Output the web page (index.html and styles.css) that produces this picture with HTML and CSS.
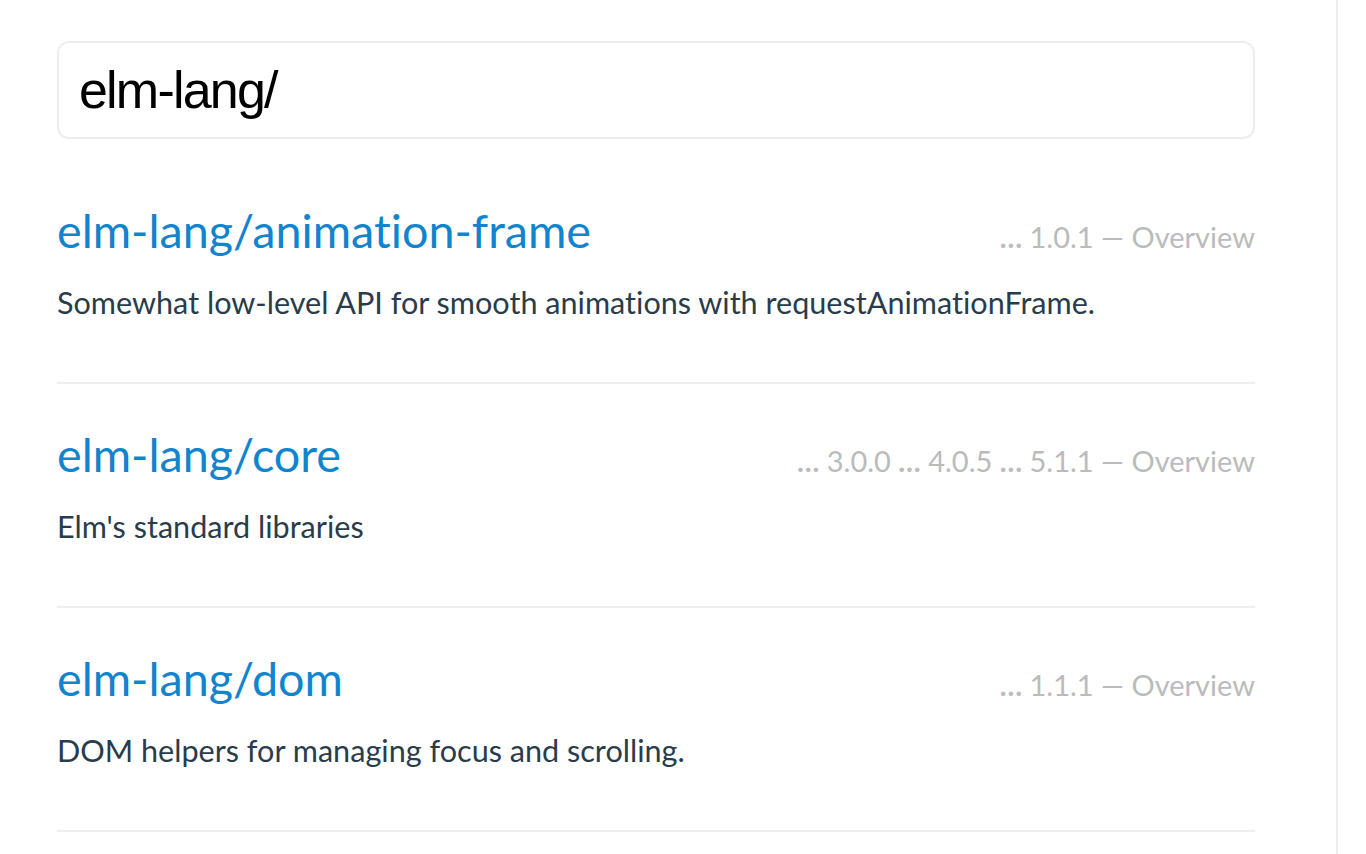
FILE: index.html
```html
<!DOCTYPE html>
<html lang="en">
<head>
<meta charset="utf-8">
<title>Elm Packages</title>
<link rel="stylesheet" href="styles.css">
</head>
<body>
<div class="page">
  <main class="content">
    <div class="search">
      <input class="search-input" type="text" value="elm-lang/">
    </div>
    <ul class="results">
      <li class="pkg">
        <div class="pkg-head">
          <a class="pkg-name" href="#">elm-lang/animation-frame</a>
          <span class="pkg-versions"><span class="dots">…</span> 1.0.1 — Overview</span>
        </div>
        <p class="pkg-summary">Somewhat low-level API for smooth animations with requestAnimationFrame.</p>
      </li>
      <li class="pkg">
        <div class="pkg-head">
          <a class="pkg-name" href="#">elm-lang/core</a>
          <span class="pkg-versions"><span class="dots">…</span> 3.0.0 <span class="dots">…</span> 4.0.5 <span class="dots">…</span> 5.1.1 — Overview</span>
        </div>
        <p class="pkg-summary">Elm's standard libraries</p>
      </li>
      <li class="pkg">
        <div class="pkg-head">
          <a class="pkg-name" href="#">elm-lang/dom</a>
          <span class="pkg-versions"><span class="dots">…</span> 1.1.1 — Overview</span>
        </div>
        <p class="pkg-summary">DOM helpers for managing focus and scrolling.</p>
      </li>
    </ul>
  </main>
</div>
</body>
</html>
```
FILE: styles.css
```css
html, body {
  margin: 0;
  padding: 0;
  background: #ffffff;
}

body {
  font-family: Lato, "Noto Sans", sans-serif;
  font-variant-ligatures: none;
  color: #293c4b;
  overflow: hidden;
}

.page {
  width: 1338px;
  min-height: 854px;
  box-sizing: border-box;
  border-right: 2px solid #eeeeee;
}

.content {
  width: 1198px;
  padding: 41px 0 0 57px;
}

.search {
  display: flex;
}

.search-input {
  flex: 1;
  height: 98px;
  box-sizing: border-box;
  margin: 0;
  border: 2px solid #eeeeee;
  border-radius: 12px;
  padding: 0 20px;
  font-family: "Liberation Sans", Arial, sans-serif;
  font-size: 52px;
  letter-spacing: -1.8px;
  color: #000000;
  background: #ffffff;
  outline: none;
}

.results {
  list-style: none;
  margin: 21px 0 0;
  padding: 0;
}

.pkg {
  padding: 42px 0 59px;
  border-bottom: 2px solid #eeeeee;
}

.pkg-head {
  display: flex;
  justify-content: space-between;
  align-items: baseline;
}

.pkg-name {
  font-size: 46.7px;
  line-height: 57px;
  color: #1184ce;
  text-decoration: none;
}

.pkg-versions {
  font-size: 29px;
  line-height: 40px;
  color: #bbbbbb;
}

.dots {
  font-weight: 700;
  color: #bbbbbb;
}

.pkg-summary {
  margin: 24px 0 0;
  font-size: 30.6px;
  line-height: 40px;
  color: #293c4b;
}
```
